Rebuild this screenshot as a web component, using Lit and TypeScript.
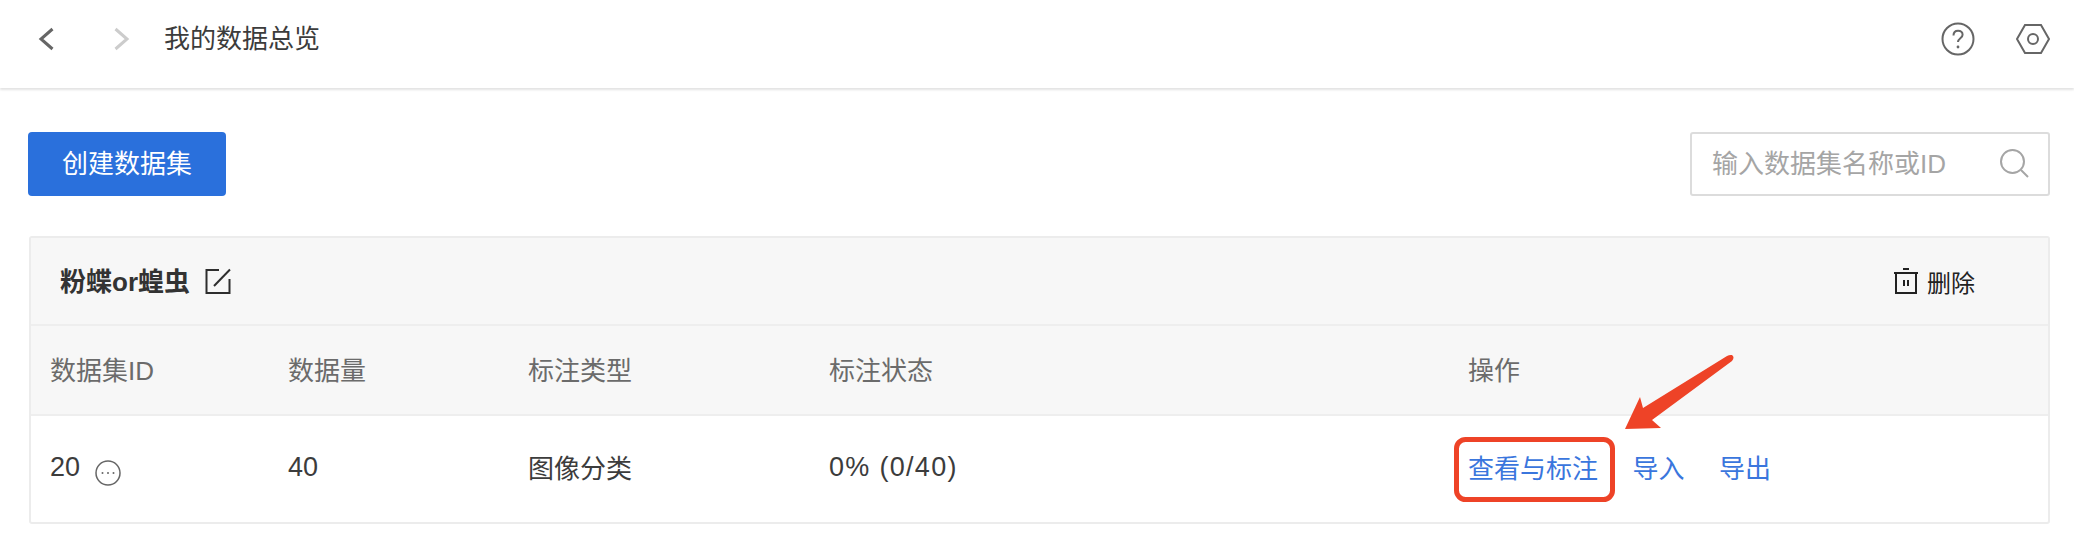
import { LitElement, html, css } from "lit";
import { customElement } from "lit/decorators.js";

@customElement("app-root")
export class AppRoot extends LitElement {
  static styles = css`
    :host {
      display: block;
      position: relative;
      width: 2074px;
      height: 548px;
      background: #fff;
      overflow: hidden;
      font-family: "Liberation Sans", "Noto Sans CJK SC", sans-serif;
      font-size: 26px;
      color: #3c3c3c;
    }
    .topbar {
      height: 88px;
      box-sizing: border-box;
      display: flex;
      align-items: center;
      padding: 0 23px 10px 38px;
      box-shadow: 0 2px 2px #e4e4e4;
    }
    .nav { display: flex; align-items: center; }
    .nav svg { display: block; }
    .nav .next { margin-left: 60px; }
    .title { margin-left: 34px; color: #3c3c3c; line-height: 36px; }
    .top-icons { margin-left: auto; display: flex; align-items: center; gap: 40px; }
    .top-icons svg { display: block; }
    .toolbar {
      display: flex;
      justify-content: space-between;
      padding: 44px 24px 0 28px;
    }
    .create {
      width: 198px;
      height: 64px;
      box-sizing: border-box;
      padding-bottom: 6px;
      background: #2a70dc;
      color: #fff;
      border-radius: 4px;
      display: flex;
      align-items: center;
      justify-content: center;
    }
    .search {
      width: 360px;
      height: 64px;
      box-sizing: border-box;
      border: 2px solid #dcdcdc;
      border-radius: 3px;
      display: flex;
      align-items: center;
      justify-content: space-between;
      padding: 0 18px 0 20px;
      color: #a5a5a5;
    }
    .search span { margin-bottom: 5px; }
    .search svg { display: block; }
    .card {
      margin: 40px 24px 0 29px;
      height: 288px;
      box-sizing: border-box;
      border: 2px solid #ececec;
      border-radius: 3px;
      display: flex;
      flex-direction: column;
    }
    .card-head {
      height: 86px;
      flex: none;
      background: #f7f7f7;
      border-bottom: 2px solid #eee;
      display: flex;
      align-items: center;
      padding: 0 73px 0 29px;
    }
    .name { font-weight: 700; color: #333; margin-bottom: 4px; }
    .edit { margin-left: 15px; display: block; }
    .del { margin-left: auto; display: flex; align-items: center; gap: 8px; color: #222; font-size: 24px; }
    .del svg { display: block; }
    .grid {
      display: grid;
      grid-template-columns: 238px 240px 301px 639px 1fr;
      padding-left: 19px;
      align-items: center;
    }
    .cols > div { margin-bottom: 4px; }
    .cols {
      height: 88px;
      flex: none;
      background: #f7f7f7;
      border-bottom: 2px solid #eee;
      color: #6b6b6b;
    }
    .row { flex: 1; color: #3c3c3c; }
    .row > div { margin-bottom: 6px; }
    .row > .num, .row > .status, .row > .id { margin-bottom: 3px; }
    .num { font-size: 27px; }
    .status { font-size: 27px; letter-spacing: 1.3px; }
    .id { display: flex; align-items: center; gap: 15px; }
    .id svg { display: block; margin-top: 10px; }
    .ops { display: flex; gap: 34.500px; color: #3a76dd; }
    .overlay { position: absolute; left: 0; top: 0; pointer-events: none; }
  `;

  render() {
    return html`
      <div class="topbar">
        <div class="nav">
          <svg width="16" height="26" viewBox="0 0 16 26" fill="none" stroke="#666" stroke-width="3">
            <path d="M14.500 3 3 13l11.500 10" />
          </svg>
          <svg class="next" width="16" height="26" viewBox="0 0 16 26" fill="none" stroke="#ccc" stroke-width="3">
            <path d="M1.500 3 13 13 1.500 23" />
          </svg>
        </div>
        <div class="title">我的数据总览</div>
        <div class="top-icons">
          <svg width="34" height="34" viewBox="0 0 34 34" fill="none" stroke="#666" stroke-width="2">
            <circle cx="17" cy="17" r="15.500" />
            <path d="M12.500 13.500c0-3 2-4.800 4.600-4.800s4.500 1.700 4.500 4c0 3.600-4.600 3.600-4.600 7.400" />
            <circle cx="17" cy="25" r="1.400" fill="#666" stroke="none" />
          </svg>
          <svg width="36" height="32" viewBox="0 0 36 32" fill="none" stroke="#666" stroke-width="2">
            <path d="M10 2h16l8 14-8 14H10L2 16z" />
            <circle cx="18" cy="16" r="5" />
          </svg>
        </div>
      </div>

      <div class="toolbar">
        <div class="create">创建数据集</div>
        <div class="search">
          <span>输入数据集名称或ID</span>
          <svg width="30" height="30" viewBox="0 0 30 30" fill="none" stroke="#a5a5a5" stroke-width="2">
            <circle cx="12.500" cy="12.500" r="11.500" />
            <path d="M21 21l7 7" />
          </svg>
        </div>
      </div>

      <div class="card">
        <div class="card-head">
          <span class="name">粉蝶or蝗虫</span>
          <svg class="edit" width="26" height="26" viewBox="0 0 26 26" fill="none" stroke="#2e2e2e" stroke-width="2">
            <path d="M14 2H1.500v23h23V11" />
            <path d="M9 18 25 1.500" />
          </svg>
          <span class="del">
            <svg width="26" height="26" viewBox="0 0 26 26" fill="none" stroke="#222" stroke-width="2">
              <path d="M1 5h24M10 1h6M3 5v20h20V5M11 12v6M15 12v6" />
            </svg>
            删除
          </span>
        </div>
        <div class="grid cols">
          <div>数据集ID</div>
          <div>数据量</div>
          <div>标注类型</div>
          <div>标注状态</div>
          <div>操作</div>
        </div>
        <div class="grid row">
          <div class="id">
            <span class="num">20</span>
            <svg width="26" height="26" viewBox="0 0 26 26" fill="none" stroke="#666" stroke-width="1.500">
              <circle cx="13" cy="13" r="12" />
              <circle cx="7.500" cy="13" r="1" fill="#666" stroke="none" />
              <circle cx="13" cy="13" r="1" fill="#666" stroke="none" />
              <circle cx="18.500" cy="13" r="1" fill="#666" stroke="none" />
            </svg>
          </div>
          <div class="num">40</div>
          <div>图像分类</div>
          <div class="status">0% (0/40)</div>
          <div class="ops">
            <span>查看与标注</span>
            <span>导入</span>
            <span>导出</span>
          </div>
        </div>
      </div>

      <svg class="overlay" width="2074" height="548" viewBox="0 0 2074 548" fill="none">
        <rect x="1456.500" y="439.500" width="156" height="60" rx="9" stroke="#ee4327" stroke-width="5" />
        <path
          d="M1727 356 L1643 408 L1640 397 L1625 429 L1661 428 L1652 420 L1732 361 Q1735 357 1732 355 Q1729.500 354.500 1727 356 Z"
          fill="#ee4327"
        />
      </svg>
    `;
  }
}
